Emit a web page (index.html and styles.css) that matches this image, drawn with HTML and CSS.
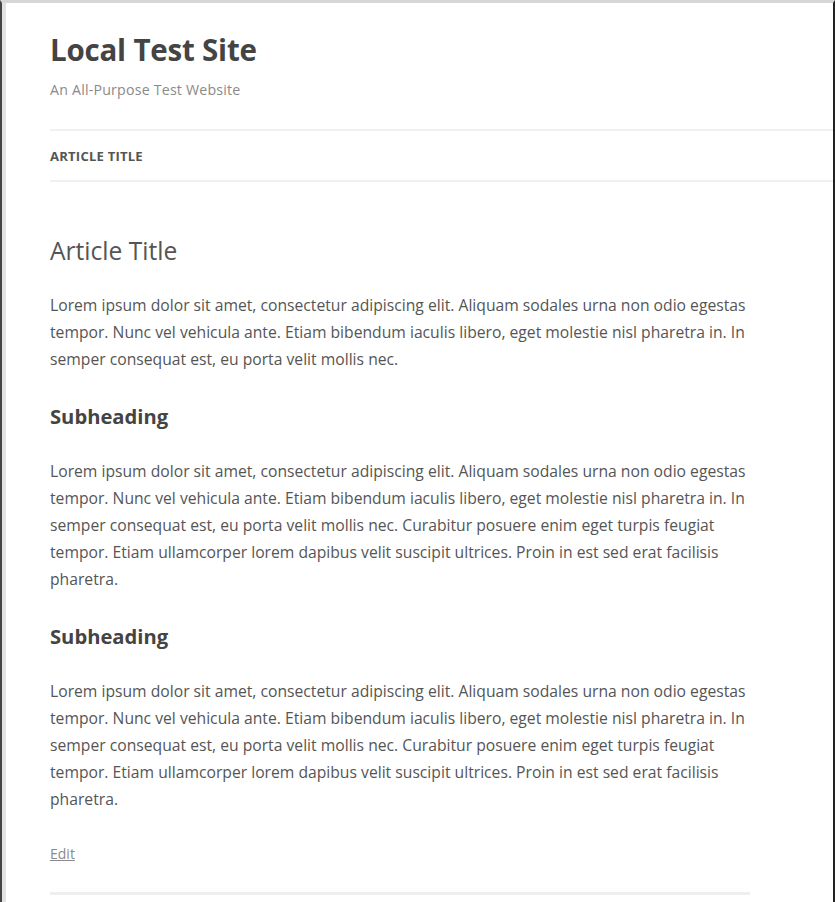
FILE: index.html
```html
<!DOCTYPE html>
<html lang="en">
<head>
<meta charset="utf-8">
<title>Local Test Site</title>
<link rel="stylesheet" href="styles.css">
</head>
<body>
<div class="window">
  <div class="page">
    <header class="site-header">
      <h1 class="site-title">Local Test Site</h1>
      <p class="site-description">An All-Purpose Test Website</p>
    </header>
    <nav class="main-nav">
      <a href="#">Article Title</a>
    </nav>
    <article class="entry">
      <h2 class="entry-title">Article Title</h2>
      <p>Lorem ipsum dolor sit amet, consectetur adipiscing elit. Aliquam sodales urna non odio egestas tempor. Nunc vel vehicula ante. Etiam bibendum iaculis libero, eget molestie nisl pharetra in. In semper consequat est, eu porta velit mollis nec.</p>
      <h3 class="sub">Subheading</h3>
      <p>Lorem ipsum dolor sit amet, consectetur adipiscing elit. Aliquam sodales urna non odio egestas tempor. Nunc vel vehicula ante. Etiam bibendum iaculis libero, eget molestie nisl pharetra in. In semper consequat est, eu porta velit mollis nec. Curabitur posuere enim eget turpis feugiat tempor. Etiam ullamcorper lorem dapibus velit suscipit ultrices. Proin in est sed erat facilisis pharetra.</p>
      <h3 class="sub">Subheading</h3>
      <p>Lorem ipsum dolor sit amet, consectetur adipiscing elit. Aliquam sodales urna non odio egestas tempor. Nunc vel vehicula ante. Etiam bibendum iaculis libero, eget molestie nisl pharetra in. In semper consequat est, eu porta velit mollis nec. Curabitur posuere enim eget turpis feugiat tempor. Etiam ullamcorper lorem dapibus velit suscipit ultrices. Proin in est sed erat facilisis pharetra.</p>
      <footer class="entry-meta">
        <a href="#">Edit</a>
      </footer>
    </article>
  </div>
</div>
</body>
</html>
```

FILE: styles.css
```css
html, body {
  margin: 0;
  padding: 0;
  background: #ffffff;
}

body {
  font-family: "Open Sans", "Noto Sans", sans-serif;
  color: #444444;
}

.window {
  box-sizing: border-box;
  height: 902px;
  overflow: hidden;
  border-top: 3px solid #d6d6d6;
  border-left: 2px solid #444444;
  border-right: 2px solid #222222;
}

.page {
  box-sizing: border-box;
  height: 100%;
  border-left: 4px solid #e2e2e2;
  padding-left: 44px;
}

.site-header {
  padding-top: 29px;
}

.site-title {
  margin: 0;
  font-size: 29.5px;
  font-weight: 700;
  line-height: 36px;
  color: #444444;
  letter-spacing: -0.2px;
}

.site-description {
  margin: 12px 0 0;
  font-size: 14.2px;
  line-height: 20px;
  letter-spacing: 0.2px;
  color: #8a8a8a;
}

.main-nav {
  margin-top: 29px;
  border-top: 2px solid #f0f0f0;
  border-bottom: 2px solid #f0f0f0;
  height: 49px;
  display: flex;
  align-items: center;
}

.main-nav a {
  font-size: 13.1px;
  font-weight: 700;
  letter-spacing: 0.2px;
  text-transform: uppercase;
  color: #555555;
  text-decoration: none;
}

.entry {
  width: 700px;
  padding-top: 53px;
  padding-bottom: 26px;
  border-bottom: 3px solid #efefef;
}

.entry-title {
  margin: 0;
  font-size: 24.6px;
  font-weight: 400;
  line-height: 32px;
  color: #555555;
}

.entry p {
  margin: 24.5px 0 0;
  font-size: 15.7px;
  line-height: 27px;
  color: #555555;
}

.sub {
  margin: 28.5px 0 0;
  font-size: 20.2px;
  font-weight: 700;
  line-height: 30px;
  color: #444444;
}

.sub + p {
  margin-top: 26.5px;
}

.entry-meta {
  margin-top: 29.5px;
  font-size: 14px;
  line-height: 24px;
}

.entry-meta a {
  color: #8a8a8a;
}
```
